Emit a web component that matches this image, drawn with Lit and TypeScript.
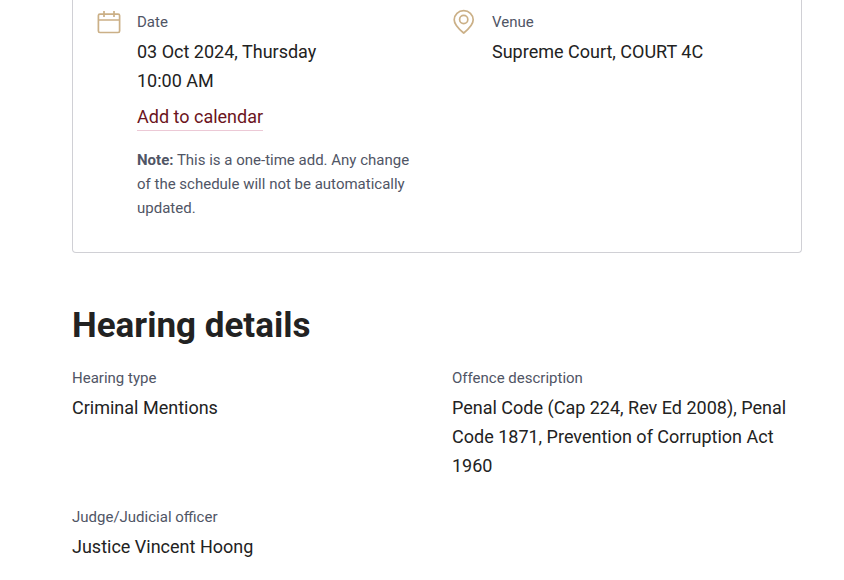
import { LitElement, html, css } from "lit";
import { customElement } from "lit/decorators.js";

@customElement("app-root")
export class AppRoot extends LitElement {
  static styles = css`
    :host {
      display: block;
      background: #fff;
      color: #222;
      font-family: Roboto, "Liberation Sans", sans-serif;
      font-size: 18px;
      line-height: 29px;
    }
    main {
      padding: 0 42px 16px 72px;
    }
    .card {
      display: grid;
      grid-template-columns: 1fr 1fr;
      column-gap: 30px;
      border: 1px solid #d0d0d5;
      border-top: 0;
      border-radius: 0 0 4px 4px;
      padding: 8px 24px 32px;
    }
    .item {
      display: flex;
      gap: 16px;
      align-items: flex-start;
    }
    .icon {
      flex: none;
      width: 24px;
      height: 28px;
    }
    dl, dd, dt, p, h2 {
      margin: 0;
    }
    dt {
      font-size: 15px;
      line-height: 28px;
      color: #505565;
    }
    dd {
      padding-top: 1px;
    }
    a {
      display: inline-block;
      margin-top: 8px;
      line-height: 27px;
      color: #6b1420;
      text-decoration: none;
      border-bottom: 1px solid #ecc9d6;
    }
    .note {
      margin-top: 17px;
      font-size: 15px;
      line-height: 24px;
      color: #505565;
    }
    h2 {
      margin-top: 49px;
      font-size: 35px;
      line-height: 48px;
      font-weight: 700;
    }
    .details {
      display: grid;
      grid-template-columns: 1fr 1fr;
      column-gap: 30px;
      row-gap: 23px;
      margin-top: 14px;
    }
  `;

  render() {
    return html`
      <main>
        <section class="card">
          <div class="item">
            <svg class="icon" viewBox="0 0 24 28" fill="none" stroke="#cbb087" stroke-width="1.7" aria-hidden="true">
              <rect x="1.4" y="6.1" width="21.2" height="18.4" rx="1.5" />
              <path d="M1.4 12H22.6M7 3V9M17 3V9" />
            </svg>
            <div>
              <dl>
                <dt>Date</dt>
                <dd>03 Oct 2024, Thursday<br />10:00 AM</dd>
              </dl>
              <a href="#calendar">Add to calendar</a>
              <p class="note"><b>Note:</b> This is a one-time add. Any change of the schedule will not be automatically updated.</p>
            </div>
          </div>
          <div class="item">
            <svg class="icon" viewBox="0 0 24 28" fill="none" stroke="#cbb087" stroke-width="1.7" aria-hidden="true">
              <path d="M11.7 25C8.5 22.4 2.2 17.5 2.2 11.8A9.5 9.2 0 0 1 21.2 11.8C21.2 17.5 14.9 22.4 11.7 25Z" />
              <circle cx="11.7" cy="11.5" r="4.1" />
            </svg>
            <dl>
              <dt>Venue</dt>
              <dd>Supreme Court, COURT 4C</dd>
            </dl>
          </div>
        </section>
        <h2>Hearing details</h2>
        <dl class="details">
          <div><dt>Hearing type</dt><dd>Criminal Mentions</dd></div>
          <div><dt>Offence description</dt><dd>Penal Code (Cap 224, Rev Ed 2008), Penal Code 1871, Prevention of Corruption Act 1960</dd></div>
          <div><dt>Judge/Judicial officer</dt><dd>Justice Vincent Hoong</dd></div>
        </dl>
      </main>
    `;
  }
}
